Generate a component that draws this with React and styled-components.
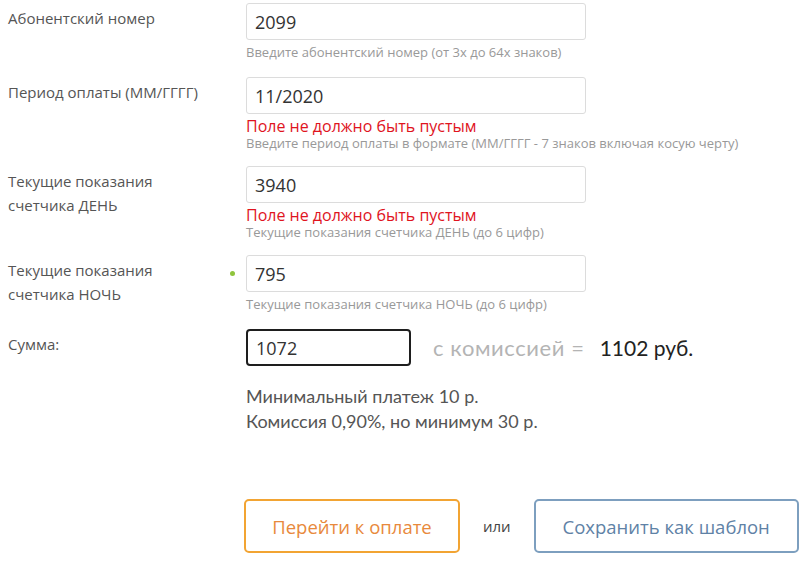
import styled, { createGlobalStyle } from 'styled-components';

const GlobalStyle = createGlobalStyle`
  body {
    margin: 0;
    background: #fff;
    font-family: "Open Sans", "Liberation Sans", sans-serif;
  }
`;

const Form = styled.form`
  padding: 3px 0 0 8px;
  width: 797px;
`;

const Row = styled.div`
  display: grid;
  grid-template-columns: 238px 1fr;
  margin-bottom: ${(p) => (p.$hasError ? 14 : 16)}px;
`;

const Label = styled.label`
  color: #555;
  font-size: 15px;
  line-height: 24px;
  padding-top: 3px;
`;

const Field = styled.div`
  position: relative;
`;

const Input = styled.input`
  box-sizing: border-box;
  display: block;
  width: ${(p) => p.$width || 340}px;
  height: 37px;
  padding: 0 8px;
  border: ${(p) => (p.$focused ? '2px solid #1e1e1e' : '1px solid #dcdcdc')};
  border-radius: ${(p) => (p.$focused ? 4 : 3)}px;
  font-family: "Open Sans", sans-serif;
  font-size: 18px;
  color: #333;
  outline: none;
  background: #fff;
`;

const Dot = styled.span`
  position: absolute;
  left: -16px;
  top: 16px;
  width: 5px;
  height: 5px;
  border-radius: 50%;
  background: #8fc43c;
`;

const Messages = styled.div`
  margin-top: 4px;
`;

const Error = styled.div`
  color: #e0141e;
  font-size: 16px;
  line-height: 17px;
`;

const Hint = styled.div`
  color: #999;
  font-size: 13px;
  line-height: 17px;
`;

const SumLine = styled.div`
  display: flex;
  align-items: center;
`;

const Commission = styled.span`
  margin-left: 22px;
  font-family: Lato, sans-serif;
  font-size: 22px;
  color: #b4b4b4;
  letter-spacing: 0.6px;
`;

const Total = styled.span`
  margin-left: 15px;
  font-family: Lato, sans-serif;
  font-size: 21px;
  color: #222;
`;

const Info = styled.div`
  margin-top: 18px;
  font-family: Lato, sans-serif;
  font-size: 18px;
  line-height: 25px;
  color: #555;
`;

const Actions = styled.div`
  display: flex;
  align-items: center;
  margin: 65px 0 0 236px;
`;

const Button = styled.button`
  box-sizing: border-box;
  height: 54px;
  width: ${(p) => p.$width}px;
  background: #fff;
  border: 2px solid ${(p) => p.$border};
  border-radius: 5px;
  color: ${(p) => p.$color};
  font-family: "Open Sans", sans-serif;
  font-size: 18.5px;
  cursor: pointer;
`;

const Or = styled.span`
  margin: 0 23px 0 23px;
  font-size: 15px;
  color: #444;
`;

const fields = [
  {
    label: 'Абонентский номер',
    value: '2099',
    hint: 'Введите абонентский номер (от 3х до 64х знаков)',
  },
  {
    label: 'Период оплаты (ММ/ГГГГ)',
    value: '11/2020',
    error: 'Поле не должно быть пустым',
    hint: 'Введите период оплаты в формате (ММ/ГГГГ - 7 знаков включая косую черту)',
  },
  {
    label: (
      <>
        Текущие показания
        <br />
        счетчика ДЕНЬ
      </>
    ),
    value: '3940',
    error: 'Поле не должно быть пустым',
    hint: 'Текущие показания счетчика ДЕНЬ (до 6 цифр)',
  },
  {
    label: (
      <>
        Текущие показания
        <br />
        счетчика НОЧЬ
      </>
    ),
    value: '795',
    marked: true,
    hint: 'Текущие показания счетчика НОЧЬ (до 6 цифр)',
  },
];

export default function App() {
  return (
    <>
      <GlobalStyle />
      <Form onSubmit={(e) => e.preventDefault()}>
        {fields.map((f, i) => (
          <Row key={i} $hasError={!!f.error}>
            <Label>{f.label}</Label>
            <Field>
              {f.marked && <Dot />}
              <Input defaultValue={f.value} />
              <Messages>
                {f.error && <Error>{f.error}</Error>}
                <Hint>{f.hint}</Hint>
              </Messages>
            </Field>
          </Row>
        ))}
        <Row>
          <Label>Сумма:</Label>
          <Field>
            <SumLine>
              <Input $focused $width={165} defaultValue="1072" />
              <Commission>с комиссией =</Commission>
              <Total>1102 руб.</Total>
            </SumLine>
            <Info>
              Минимальный платеж 10 р.
              <br />
              Комиссия 0,90%, но минимум 30 р.
            </Info>
          </Field>
        </Row>
        <Actions>
          <Button $width={216} $border="#f2a433" $color="#e8893c">
            Перейти к оплате
          </Button>
          <Or>или</Or>
          <Button $width={265} $border="#7d9fbf" $color="#5f82a6">
            Сохранить как шаблон
          </Button>
        </Actions>
      </Form>
    </>
  );
}
